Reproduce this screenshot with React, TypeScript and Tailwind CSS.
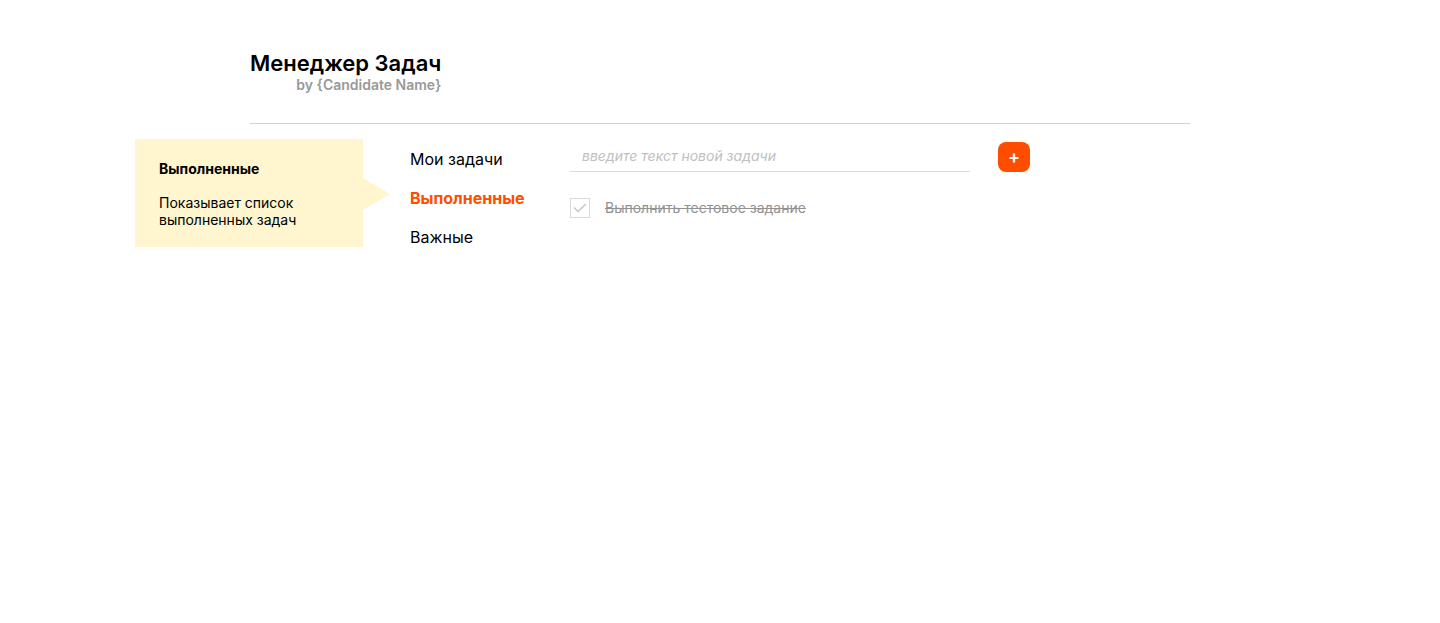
import { useState } from "react";
import type { FormEvent } from "react";

type Task = { id: number; text: string; done: boolean };
type Section = { title: string; hint?: string };

const sections: Section[] = [
  { title: "Мои задачи" },
  { title: "Выполненные", hint: "Показывает список выполненных задач" },
  { title: "Важные" },
];

function Hint({ title, text }: { title: string; text: string }) {
  return (
    <div
      role="tooltip"
      className="absolute right-full -top-[50px] mr-5 flex w-[255px] items-start text-sm leading-[17px] text-black"
    >
      <div className="w-[228px] shrink-0 bg-[#fff5cf] px-6 pt-[21px] pb-[19px]">
        <p className="font-bold">{title}</p>
        <p className="mt-[17px]">{text}</p>
      </div>
      <svg width="27" height="32" viewBox="0 0 27 32" className="mt-[39px] shrink-0" aria-hidden="true">
        <path d="M0 0L27 16L0 32Z" fill="#fff5cf" />
      </svg>
    </div>
  );
}

function TaskRow({ task, onToggle }: { task: Task; onToggle: () => void }) {
  return (
    <li>
      <label className="flex items-center gap-[15px] text-sm">
        <span className="grid size-5 place-items-center">
          <input
            type="checkbox"
            checked={task.done}
            onChange={onToggle}
            className="col-start-1 row-start-1 size-5 appearance-none border border-[#dadada] bg-white"
          />
          {task.done && (
            <svg
              width="14"
              height="10"
              viewBox="0 0 14 10"
              fill="none"
              className="pointer-events-none col-start-1 row-start-1"
              aria-hidden="true"
            >
              <path d="M1 4.5L5 8.5L13 1" stroke="#c4c4c4" strokeWidth="1.4" />
            </svg>
          )}
        </span>
        <span className={task.done ? "text-[#929292] line-through" : "text-black"}>{task.text}</span>
      </label>
    </li>
  );
}

export default function App() {
  const [active, setActive] = useState("Выполненные");
  const [draft, setDraft] = useState("");
  const [tasks, setTasks] = useState<Task[]>([
    { id: 1, text: "Выполнить тестовое задание", done: true },
  ]);

  const addTask = (event: FormEvent) => {
    event.preventDefault();
    if (!draft.trim()) return;
    setTasks([...tasks, { id: Date.now(), text: draft.trim(), done: false }]);
    setDraft("");
  };

  const toggle = (id: number) =>
    setTasks(tasks.map((t) => (t.id === id ? { ...t, done: !t.done } : t)));

  return (
    <div className="mx-auto max-w-[940px] bg-white pt-[50px] font-['Inter',sans-serif] text-black">
      <header className="flex border-b border-[#d1d1d1] pb-[29px]">
        <div className="text-right">
          <h1 className="text-[22px] leading-[26px] font-semibold">Менеджер Задач</h1>
          <p className="text-sm leading-[18px] font-semibold text-[#999999]">by {"{Candidate Name}"}</p>
        </div>
      </header>

      <div className="flex pt-[18px] pl-40">
        <nav className="flex w-40 shrink-0 flex-col items-start gap-5 pt-2 text-base leading-[19px]">
          {sections.map((section) => {
            const selected = section.title === active;
            return (
              <div key={section.title} className="relative">
                <button
                  type="button"
                  onClick={() => setActive(section.title)}
                  className={selected ? "block font-bold text-[#ff4d00]" : "block"}
                >
                  {section.title}
                </button>
                {selected && section.hint && <Hint title={section.title} text={section.hint} />}
              </div>
            );
          })}
        </nav>

        <main className="max-w-[460px] grow">
          <form onSubmit={addTask} className="flex gap-7">
            <input
              type="text"
              aria-label="Новая задача"
              value={draft}
              onChange={(event) => setDraft(event.target.value)}
              placeholder="введите текст новой задачи"
              className="h-[30px] min-w-0 grow border-b border-[#dadada] px-3 pb-0.5 text-sm outline-none placeholder:text-[#c0c0c0] placeholder:italic"
            />
            <button
              type="submit"
              aria-label="Добавить задачу"
              className="h-[30px] w-8 shrink-0 rounded-lg bg-[#ff4d00] text-center text-lg leading-[30px] font-semibold text-white"
            >
              +
            </button>
          </form>

          <ul className="mt-[26px] flex flex-col gap-4">
            {tasks.map((task) => (
              <TaskRow key={task.id} task={task} onToggle={() => toggle(task.id)} />
            ))}
          </ul>
        </main>
      </div>
    </div>
  );
}
